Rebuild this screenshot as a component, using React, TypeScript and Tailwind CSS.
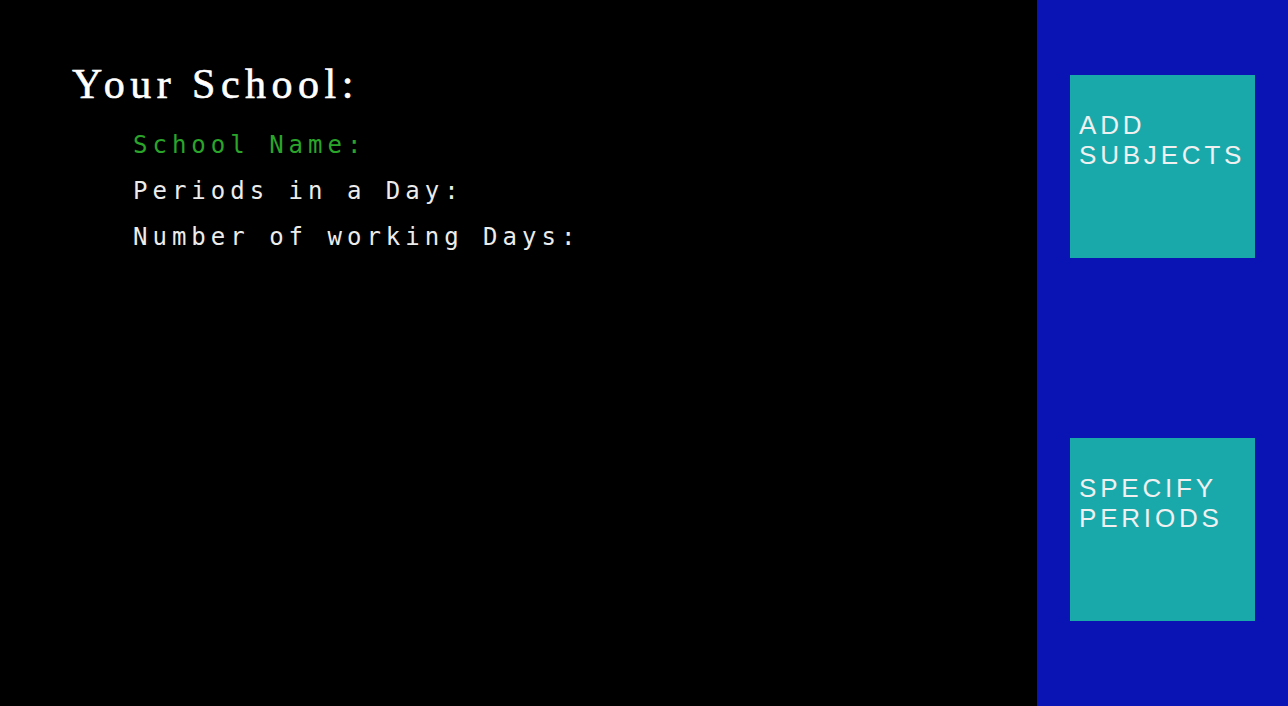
export default function App() {
  const fields = [
    { label: "School Name:", active: true },
    { label: "Periods in a Day:", active: false },
    { label: "Number of working Days:", active: false },
  ];

  const actions = ["ADD SUBJECTS", "SPECIFY PERIODS"];

  return (
    <div className="flex h-[706px] w-full bg-black">
      {/* Form area */}
      <div className="flex-1 pl-[72px] pt-[60px]">
        <h1 className="font-['Liberation_Serif',serif] text-[42px] leading-[48px] tracking-[5.5px] text-white [-webkit-text-stroke:0.6px_white]">
          Your School:
        </h1>
        <ul className="mt-[23px] flex flex-col gap-[18px] pl-[61px]">
          {fields.map((f) => (
            <li
              key={f.label}
              className={
                "font-['DejaVu_Sans_Mono',monospace] text-[24px] leading-[28px] tracking-[5px] " +
                (f.active ? "text-[#2aa52a]" : "text-[#ececec]")
              }
            >
              {f.label}
            </li>
          ))}
        </ul>
      </div>

      {/* Side panel */}
      <div className="flex w-[251px] flex-col gap-[180px] bg-[#0a14b4] pl-[33px] pt-[75px]">
        {actions.map((a) => (
          <button
            key={a}
            className="flex h-[183px] w-[185px] self-start bg-[#1aa9ab] px-[9px] pt-[35px] text-left font-['Liberation_Sans',sans-serif] text-[26px] leading-[30px] tracking-[3.8px] text-[#f0f0f0]"
          >
            <span>
              {a.split(" ").map((w) => (
                <span key={w} className="block">
                  {w}
                </span>
              ))}
            </span>
          </button>
        ))}
      </div>
    </div>
  );
}
